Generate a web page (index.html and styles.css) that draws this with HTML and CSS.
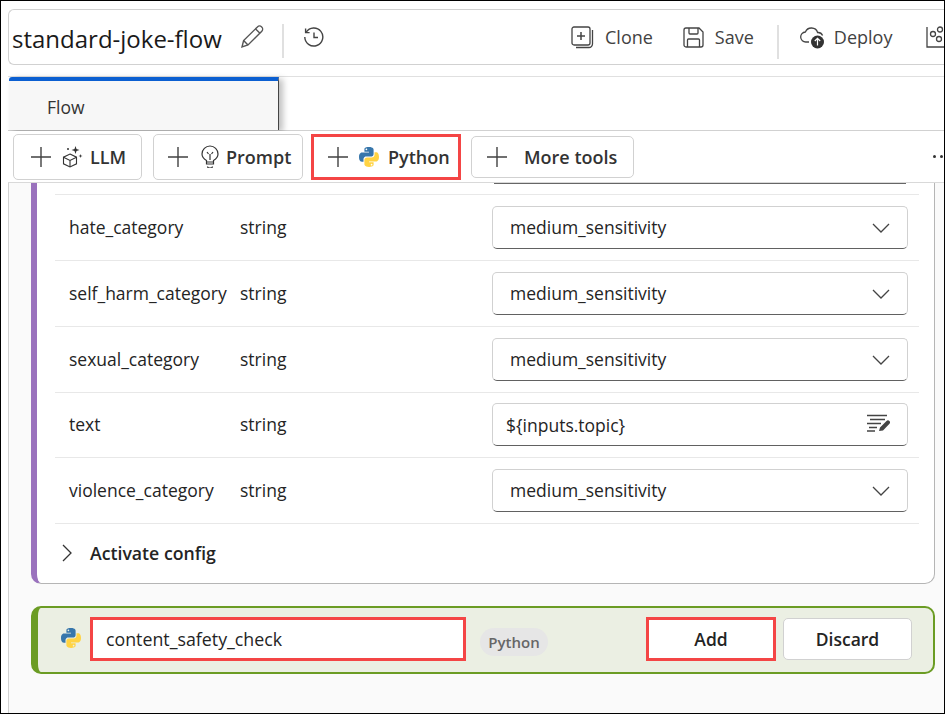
FILE: index.html
```html
<!DOCTYPE html>
<html lang="en">
<head>
<meta charset="utf-8">
<title>standard-joke-flow</title>
<link rel="stylesheet" href="styles.css">
</head>
<body>
<svg class="defs" width="0" height="0" aria-hidden="true">
  <defs>
    <g id="py">
      <path fill="#3776ab" d="M9.900 0C5.600 0 5.400 1.900 5.400 1.900v2.900h4.600v.8H3.200S0 5.300 0 10.100s2.800 4.700 2.800 4.700h1.700v-2.400s-.1-2.900 2.800-2.900h4.600s2.700 0 2.700-2.600V2.700S14.700 0 9.900 0zM7.400 1.500a.85.85 0 1 1 0 1.700.85.85 0 0 1 0-1.700z"/>
      <path fill="#ffd343" d="M10.100 20c4.300 0 4.500-1.900 4.500-1.900v-2.900H10v-.8h6.800s3.200.3 3.200-4.500-2.800-4.700-2.800-4.700h-1.700v2.400s.1 2.900-2.800 2.900H8.100s-2.700 0-2.700 2.600v4.200S5.300 20 10.100 20zm2.500-1.500a.85.85 0 1 1 0-1.700.85.85 0 0 1 0 1.700z"/>
    </g>
    <path id="plus" d="M11 1v20M1 11h20" fill="none" stroke="#424242" stroke-width="1.4"/>
    <path id="chev" d="M1 1l8 8 8-8" fill="none" stroke="#444" stroke-width="1.3"/>
  </defs>
</svg>
<div class="frame">
  <header class="head">
    <h1 class="title">standard-joke-flow</h1>
    <svg class="ic pencil" width="24" height="24" viewBox="0 0 24 24" fill="none" stroke="#555" stroke-width="1.4"><path d="M2 22l1.600-6.400L17.400 2a2.900 2.900 0 0 1 4.400 4.200L8 20z"/><path d="M15.600 4l4.400 4.300"/><path d="M3.600 15.600l4.400 4.400"/></svg>
    <span class="sep sep-a"></span>
    <svg class="ic hist" width="21" height="20" viewBox="0 0 21 20" fill="none" stroke="#444" stroke-width="1.4"><path d="M3.200 5.200A9 9 0 1 1 1.800 10"/><path d="M2.600 1.600v4h4"/><path d="M11 5.500v5h4"/></svg>
    <div class="actions">
      <svg class="ic" width="23" height="23" viewBox="0 0 23 23" fill="none" stroke="#444" stroke-width="1.3"><rect x="1" y="1" width="18" height="18" rx="2"/><path d="M10 6v8M6 10h8" stroke-width="1.5"/><path d="M21.500 4v14a3.500 3.500 0 0 1-3.500 3.500H5"/></svg>
      <span class="act clone">Clone</span>
      <svg class="ic" width="21" height="21" viewBox="0 0 21 21" fill="none" stroke="#444" stroke-width="1.3"><path d="M1 3a2 2 0 0 1 2-2h13l4 4v13a2 2 0 0 1-2 2H3a2 2 0 0 1-2-2z"/><path d="M6 1v5a1 1 0 0 0 1 1h7a1 1 0 0 0 1-1V1"/><path d="M4.500 20v-7a1 1 0 0 1 1-1h10a1 1 0 0 1 1 1v7"/></svg>
      <span class="act">Save</span>
      <span class="sep sep-b"></span>
      <svg class="ic" width="25" height="23" viewBox="0 0 25 23" fill="none" stroke="#444" stroke-width="1.3"><path d="M9 16H6a5 5 0 0 1-.6-10A6.500 6.500 0 0 1 17.600 6.500a5 5 0 0 1 5 3"/><circle cx="17.500" cy="16" r="6.500" fill="#333" stroke="none"/><path d="M17.500 19.500v-7M14.800 15l2.700-2.700 2.700 2.700" stroke="#fff" stroke-width="1.200"/></svg>
      <span class="act deploy">Deploy</span>
      <svg class="ic" width="24" height="22" viewBox="0 0 24 22" fill="none" stroke="#444" stroke-width="1.3"><path d="M1 1v20h20"/><circle cx="7" cy="8" r="2.500"/><circle cx="14" cy="3.500" r="2.500"/><circle cx="13" cy="13" r="2.500"/></svg>
    </div>
  </header>

  <div class="tabs">
    <div class="tab">Flow</div>
  </div>

  <div class="toolbar">
    <button class="tool tool-llm">
      <svg class="tplus" width="22" height="22" viewBox="0 0 22 22"><use href="#plus"/></svg>
      <svg width="21" height="23" viewBox="0 0 21 23" fill="none" stroke="#333" stroke-width="1.100"><path d="M8 9l6.500 3.200v6.600L8 22l-6.500-3.200v-6.600z"/><path d="M1.500 12.200L8 15.500l6.500-3.300M8 15.500V22"/><path d="M13.500 1l1 3 3 1-3 1-1 3-1-3-3-1 3-1z" fill="#333" stroke="none"/><path d="M18.500 9l.5 1.600 1.500.4-1.500.5-.5 1.500-.5-1.500-1.500-.5 1.500-.4z" fill="#333" stroke="none"/><circle cx="6" cy="4" r="1" fill="#333" stroke="none"/></svg>
      <span>LLM</span>
    </button>
    <button class="tool tool-prompt">
      <svg class="tplus" width="22" height="22" viewBox="0 0 22 22"><use href="#plus"/></svg>
      <svg width="18" height="23" viewBox="0 0 18 23" fill="none" stroke="#333" stroke-width="1.200"><path d="M5.500 15.500C3 14 1 11.800 1 9a8 8 0 0 1 16 0c0 2.800-2 5-4.500 6.500V19h-7z"/><path d="M6.500 21.500a2.500 1.500 0 0 0 5 0M9 15V9M6 7l1.500 2M12 7l-1.500 2M5.500 17h7"/></svg>
      <span>Prompt</span>
    </button>
    <button class="tool tool-py marked">
      <svg class="tplus" width="22" height="22" viewBox="0 0 22 22"><use href="#plus"/></svg>
      <svg width="20" height="20" viewBox="0 0 20 20"><use href="#py"/></svg>
      <span>Python</span>
    </button>
    <button class="tool tool-more">
      <svg class="tplus" width="22" height="22" viewBox="0 0 22 22"><use href="#plus"/></svg>
      <span>More tools</span>
    </button>
    <span class="dots"><i></i><i></i></span>
  </div>

  <main class="canvas">
    <section class="node">
      <div class="stub"></div>
      <div class="row">
        <span class="name">hate_category</span><span class="type">string</span>
        <div class="field select"><span>medium_sensitivity</span><svg width="18" height="10" viewBox="0 0 18 10"><use href="#chev"/></svg></div>
      </div>
      <div class="row">
        <span class="name">self_harm_category</span><span class="type">string</span>
        <div class="field select"><span>medium_sensitivity</span><svg width="18" height="10" viewBox="0 0 18 10"><use href="#chev"/></svg></div>
      </div>
      <div class="row">
        <span class="name">sexual_category</span><span class="type">string</span>
        <div class="field select"><span>medium_sensitivity</span><svg width="18" height="10" viewBox="0 0 18 10"><use href="#chev"/></svg></div>
      </div>
      <div class="row row-text">
        <span class="name">text</span><span class="type">string</span>
        <div class="field expr"><span>${inputs.topic}</span><svg width="24" height="20" viewBox="0 0 24 20" fill="none" stroke="#444" stroke-width="1.300"><path d="M1 1.500h20M4 5.500h15M1 9.500h14M3 13.500h8M1 17h8"/><path d="M13 17l1-3.500 6.500-6.500a2 2 0 0 1 3 2.800L17 16.500z" fill="#444" stroke="none"/></svg></div>
      </div>
      <div class="row">
        <span class="name">violence_category</span><span class="type">string</span>
        <div class="field select"><span>medium_sensitivity</span><svg width="18" height="10" viewBox="0 0 18 10"><use href="#chev"/></svg></div>
      </div>
      <div class="config">
        <svg width="10" height="18" viewBox="0 0 10 18"><path d="M1 1l8 8-8 8" fill="none" stroke="#333" stroke-width="1.300"/></svg>
        <span>Activate config</span>
      </div>
    </section>

    <section class="newnode">
      <svg class="py-big" width="20" height="20" viewBox="0 0 20 20"><use href="#py"/></svg>
      <div class="nameinput marked">content_safety_check</div>
      <span class="chip">Python</span>
      <button class="btn add marked">Add</button>
      <button class="btn discard">Discard</button>
    </section>
  </main>
</div>
</body>
</html>
```

FILE: styles.css
```css
* { box-sizing: border-box; }
html, body { margin: 0; padding: 0; }
body { width: 945px; height: 714px; overflow: hidden; background: #fff; font-family: "Open Sans", "Noto Sans", sans-serif; color: #242424; }
.defs { position: absolute; }
.frame { width: 945px; height: 714px; border: 1px solid #000; padding: 8px 0 0 7px; display: flex; flex-direction: column; overflow: hidden; background: #fff; }
button { font-family: inherit; }
.head { height: 56px; flex: none; border: 1px solid #d1d1d1; border-right: 0; border-radius: 6px 0 0 6px; display: flex; align-items: center; padding-left: 3px; }
.title { margin: 0; font-size: 24px; font-weight: 500; color: #1a1a1a; white-space: nowrap; width: 228px; flex: none; padding-top: 2px; }
.ic { flex: none; }
.sep { width: 2px; height: 34px; background: #e0e0e0; flex: none; }
.sep-a { margin-left: 18px; margin-top: 8px; }
.hist { margin-left: 19px; }
.actions { display: flex; align-items: center; margin-left: 247px; flex: none; color: #424242; }
.act { font-size: 18px; font-weight: 500; white-space: nowrap; margin-left: 11px; }
.clone { margin-right: 30px; }
.sep-b { margin-left: 23px; margin-right: 21px; margin-top: 10px; }
.deploy { margin-left: 9px; margin-right: 34px; }
.tabs { height: 55px; flex: none; margin-top: 11px; border-top: 1px solid #e0e0e0; border-bottom: 1px solid #d1d1d1; display: flex; }
.tab { width: 270px; margin-left: 1px; height: 53px; background: #f7f7f7; border-top: 4px solid #0b5fd1; border-right: 1px solid #444; border-radius: 3px 0 0 0; box-shadow: 4px 2px 6px rgba(0,0,0,.25); font-size: 17.500px; color: #333; padding: 14px 0 0 38px; }
.toolbar { height: 52px; flex: none; display: flex; align-items: center; padding-left: 5px; border-bottom: 1px solid #d9d9d9; overflow: hidden; background: #fff; }
.tool { height: 46px; border: 1px solid #d1d1d1; border-radius: 5px; background: #fff; display: flex; align-items: center; gap: 7px; padding: 0; font-size: 18px; font-weight: 550; color: #333; flex: none; }
.tplus { margin-right: 4px; }
.tool-llm { width: 129px; padding-left: 16px; }
.tool-llm .tplus { margin-right: 3px; }
.tool-prompt { width: 150px; margin-left: 11px; padding-left: 13px; }
.tool-prompt .tplus { margin-right: 5px; }
.tool-py { width: 150px; margin-left: 8px; padding-left: 13px; gap: 9px; }
.tool-py .tplus { margin-right: 1px; }
.tool-more { width: 163px; margin-left: 10px; height: 42px; padding-left: 14px; gap: 16px; }
.tool-more .tplus { margin-right: 0; }
.marked { border: 3px solid #f44545 !important; border-radius: 0 !important; }
.dots { display: flex; gap: 4px; margin-left: 299px; flex: none; }
.dots i { width: 3px; height: 3px; background: #333; border-radius: 50%; }
.canvas { flex: 1; background: #fafafa; padding: 0 8px 0 22px; border-left: 1px solid #d1d1d1; min-height: 0; overflow: hidden; }
.node { height: 401px; background: #fff; border: 1px solid #b5b5b5; border-top: 0; border-left: 6px solid #9a72bd; border-radius: 0 0 10px 10px; padding: 0 15px 0 18px; width: 904px; }
.stub { height: 11px; margin: 0 13px 0 439px; border-top: 1px solid #666; }
.row { height: 66px; border-top: 1px solid #e8e8e8; display: flex; align-items: center; font-size: 17.500px; padding-left: 14px; color: #242424; }
.row-text { height: 65px; }
.name { width: 171px; flex: none; white-space: nowrap; margin-top: -1px; }
.type { width: 252px; flex: none; margin-top: -1px; }
.row-text .name, .row-text .type { margin-top: -3px; }
.field { width: 416px; height: 43px; flex: none; border: 1px solid #d1d1d1; border-bottom-color: #616161; border-radius: 5px; display: flex; align-items: center; justify-content: space-between; }
.row-text .field { margin-top: -2px; }
.select { padding: 0 17px 0 17px; }
.select span { margin-top: -2px; }
.expr { padding: 0 17px 0 13px; }
.expr span { margin-top: 2px; }
.config { height: 61px; border-top: 1px solid #e8e8e8; display: flex; align-items: center; gap: 18px; padding: 0 0 3px 7px; font-size: 17.700px; font-weight: 600; }
.newnode { width: 904px; height: 68px; margin-top: 22px; background: #ebefe3; border: 2px solid #6b9c24; border-left-width: 7px; border-radius: 10px; display: flex; align-items: center; padding: 0 0 2px 23px; }
.py-big { flex: none; margin-right: 9px; margin-top: -2px; }
.nameinput { width: 376px; height: 44px; background: #fff; padding-left: 13px; font-size: 17.800px; display: flex; align-items: center; flex: none; color: #242424; }
.chip { margin-left: 14px; width: 68px; height: 28px; background: #e6e6e6; border-radius: 14px; font-size: 15px; font-weight: 600; color: #666; display: flex; align-items: center; justify-content: center; flex: none; margin-top: 6px; }
.btn { height: 42px; background: #fff; font-size: 17.500px; font-weight: 600; color: #242424; flex: none; padding: 0; }
.add { width: 130px; height: 44px; margin-left: 98px; }
.discard { width: 129px; margin-left: 7px; border: 1px solid #d1d1d1; border-radius: 5px; }
```
